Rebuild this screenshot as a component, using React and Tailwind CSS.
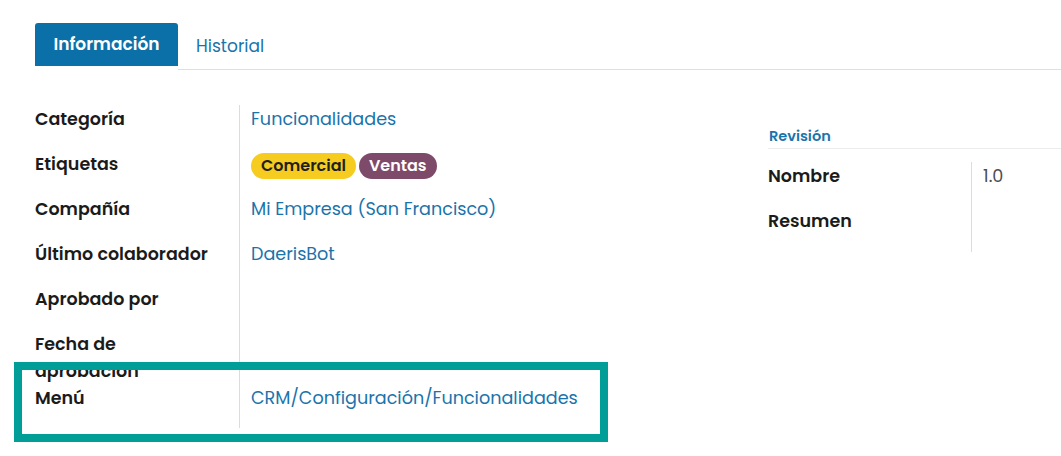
import React from 'react'

const font = { fontFamily: 'Poppins, Inter, "Noto Sans", sans-serif' }

const leftRows = [
  { label: 'Categoría', h: 'h-[45px]', value: <span className="text-[#1a74ab]">Funcionalidades</span> },
  {
    label: 'Etiquetas', h: 'h-[45px]',
    value: (
      <div className="flex items-center gap-[3px] h-[28px] pt-[3px]">
        <span className="h-[26px] leading-[26px] px-[10px] rounded-full bg-[#f5cc1f] text-[#1f1f1f] font-semibold text-[16px]">Comercial</span>
        <span className="h-[26px] leading-[26px] px-[10px] rounded-full bg-[#7e4a6a] text-white font-semibold text-[16px]">Ventas</span>
      </div>
    ),
  },
  { label: 'Compañía', h: 'h-[45px]', value: <span className="text-[#1a74ab]">Mi Empresa (San Francisco)</span> },
  { label: 'Último colaborador', h: 'h-[45px]', value: <span className="text-[#1a74ab]">DaerisBot</span> },
  { label: 'Aprobado por', h: 'h-[45px]', value: null },
  { label: <>Fecha de<br />aprobación</>, key: 'fecha', h: 'h-[54px]', value: null },
  { label: 'Menú', h: 'h-[44px]', value: <span className="text-[#1a74ab]">CRM/Configuración/Funcionalidades</span> },
]

function Row({ label, value, h, labelW }) {
  return (
    <div className={`flex ${h}`}>
      <div className={`${labelW} shrink-0 pr-2`}>
        <div className="whitespace-nowrap font-semibold text-[17.5px] leading-[27px] text-[#1b1b1b] pt-[1px]">{label}</div>
      </div>
      <div className="flex-1 border-l border-[#dcdcdc] pl-[11px] text-[17.6px] leading-[28px]">{value}</div>
    </div>
  )
}

export default function App() {
  return (
    <div className="relative w-[1061px] h-[456px] bg-white overflow-hidden" style={font}>
      <nav className="flex items-start pt-[23px]">
        <div className="w-[35px] shrink-0" />
        <div className="h-[43px] w-[143px] bg-[#0b70a8] rounded-t-[3px] flex items-center justify-center text-white font-semibold text-[17px]">
          Información
        </div>
        <div className="flex-1 h-[47px] border-b border-[#dfdfdf] flex items-start">
          <span className="ml-[18px] mt-[11px] text-[17px] leading-[24px] text-[#1a74ab]">Historial</span>
        </div>
      </nav>

      <div className="flex mt-[35px] pl-[35px]">
        <div className="w-[572px] shrink-0">
          {leftRows.map(r => (
            <Row key={r.key || r.label} {...r} labelW="w-[204px]" />
          ))}
        </div>

        <div className="flex-1 pl-[161px] mt-[18px]">
          <div className="text-[#1a74ab] font-semibold text-[14.5px] leading-[20px] pl-[1px] pt-[3px] pb-[2px] border-b border-[#ececec]">Revisión</div>
          <div className="mt-[13px]">
            <Row label="Nombre" h="h-[45px]" labelW="w-[203px]" value={<span className="text-[#4a4f55]">1.0</span>} />
            <Row label="Resumen" h="h-[45px]" labelW="w-[203px]" value={null} />
          </div>
        </div>
      </div>

      <div className="absolute left-[14px] top-[362px] w-[594px] h-[80px] border-[8px] border-[#009e96] pointer-events-none" />
    </div>
  )
}
